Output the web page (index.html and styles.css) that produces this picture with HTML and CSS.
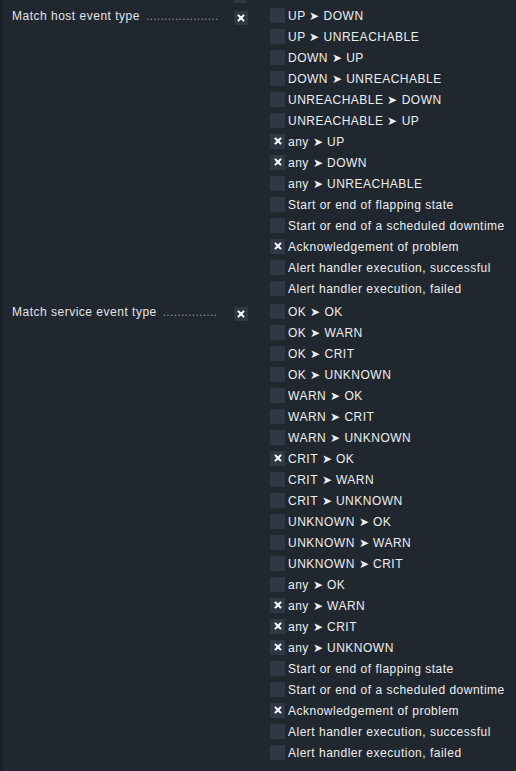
FILE: index.html
```html
<!DOCTYPE html>
<html>
<head>
<meta charset="utf-8">
<link rel="stylesheet" href="styles.css">
</head>
<body>
<div class="form">
  <div class="prev"><span class="prev-toggle"></span></div>

  <div class="row">
    <div class="title"><span class="title-text">Match host event type</span><span class="dots">....................</span></div>
    <div class="toggle"><svg viewBox="0 0 10 10" class="x"><path d="M1.2 2.6 2.6 1.2 5 3.6 7.4 1.2 8.8 2.6 6.4 5 8.8 7.4 7.4 8.8 5 6.4 2.6 8.8 1.2 7.4 3.6 5Z"/></svg></div>
    <ul class="choices">
      <li><span class="cb"></span>UP ➤ DOWN</li>
      <li><span class="cb"></span>UP ➤ UNREACHABLE</li>
      <li><span class="cb"></span>DOWN ➤ UP</li>
      <li><span class="cb"></span>DOWN ➤ UNREACHABLE</li>
      <li><span class="cb"></span>UNREACHABLE ➤ DOWN</li>
      <li><span class="cb"></span>UNREACHABLE ➤ UP</li>
      <li><span class="cb on"><svg viewBox="0 0 10 10" class="x"><path d="M1.2 2.6 2.6 1.2 5 3.6 7.4 1.2 8.8 2.6 6.4 5 8.8 7.4 7.4 8.8 5 6.4 2.6 8.8 1.2 7.4 3.6 5Z"/></svg></span>any ➤ UP</li>
      <li><span class="cb on"><svg viewBox="0 0 10 10" class="x"><path d="M1.2 2.6 2.6 1.2 5 3.6 7.4 1.2 8.8 2.6 6.4 5 8.8 7.4 7.4 8.8 5 6.4 2.6 8.8 1.2 7.4 3.6 5Z"/></svg></span>any ➤ DOWN</li>
      <li><span class="cb"></span>any ➤ UNREACHABLE</li>
      <li><span class="cb"></span>Start or end of flapping state</li>
      <li><span class="cb"></span>Start or end of a scheduled downtime</li>
      <li><span class="cb on"><svg viewBox="0 0 10 10" class="x"><path d="M1.2 2.6 2.6 1.2 5 3.6 7.4 1.2 8.8 2.6 6.4 5 8.8 7.4 7.4 8.8 5 6.4 2.6 8.8 1.2 7.4 3.6 5Z"/></svg></span>Acknowledgement of problem</li>
      <li><span class="cb"></span>Alert handler execution, successful</li>
      <li><span class="cb"></span>Alert handler execution, failed</li>
    </ul>
  </div>

  <div class="row">
    <div class="title"><span class="title-text">Match service event type</span><span class="dots">...............</span></div>
    <div class="toggle"><svg viewBox="0 0 10 10" class="x"><path d="M1.2 2.6 2.6 1.2 5 3.6 7.4 1.2 8.8 2.6 6.4 5 8.8 7.4 7.4 8.8 5 6.4 2.6 8.8 1.2 7.4 3.6 5Z"/></svg></div>
    <ul class="choices">
      <li><span class="cb"></span>OK ➤ OK</li>
      <li><span class="cb"></span>OK ➤ WARN</li>
      <li><span class="cb"></span>OK ➤ CRIT</li>
      <li><span class="cb"></span>OK ➤ UNKNOWN</li>
      <li><span class="cb"></span>WARN ➤ OK</li>
      <li><span class="cb"></span>WARN ➤ CRIT</li>
      <li><span class="cb"></span>WARN ➤ UNKNOWN</li>
      <li><span class="cb on"><svg viewBox="0 0 10 10" class="x"><path d="M1.2 2.6 2.6 1.2 5 3.6 7.4 1.2 8.8 2.6 6.4 5 8.8 7.4 7.4 8.8 5 6.4 2.6 8.8 1.2 7.4 3.6 5Z"/></svg></span>CRIT ➤ OK</li>
      <li><span class="cb"></span>CRIT ➤ WARN</li>
      <li><span class="cb"></span>CRIT ➤ UNKNOWN</li>
      <li><span class="cb"></span>UNKNOWN ➤ OK</li>
      <li><span class="cb"></span>UNKNOWN ➤ WARN</li>
      <li><span class="cb"></span>UNKNOWN ➤ CRIT</li>
      <li><span class="cb"></span>any ➤ OK</li>
      <li><span class="cb on"><svg viewBox="0 0 10 10" class="x"><path d="M1.2 2.6 2.6 1.2 5 3.6 7.4 1.2 8.8 2.6 6.4 5 8.8 7.4 7.4 8.8 5 6.4 2.6 8.8 1.2 7.4 3.6 5Z"/></svg></span>any ➤ WARN</li>
      <li><span class="cb on"><svg viewBox="0 0 10 10" class="x"><path d="M1.2 2.6 2.6 1.2 5 3.6 7.4 1.2 8.8 2.6 6.4 5 8.8 7.4 7.4 8.8 5 6.4 2.6 8.8 1.2 7.4 3.6 5Z"/></svg></span>any ➤ CRIT</li>
      <li><span class="cb on"><svg viewBox="0 0 10 10" class="x"><path d="M1.2 2.6 2.6 1.2 5 3.6 7.4 1.2 8.8 2.6 6.4 5 8.8 7.4 7.4 8.8 5 6.4 2.6 8.8 1.2 7.4 3.6 5Z"/></svg></span>any ➤ UNKNOWN</li>
      <li><span class="cb"></span>Start or end of flapping state</li>
      <li><span class="cb"></span>Start or end of a scheduled downtime</li>
      <li><span class="cb on"><svg viewBox="0 0 10 10" class="x"><path d="M1.2 2.6 2.6 1.2 5 3.6 7.4 1.2 8.8 2.6 6.4 5 8.8 7.4 7.4 8.8 5 6.4 2.6 8.8 1.2 7.4 3.6 5Z"/></svg></span>Acknowledgement of problem</li>
      <li><span class="cb"></span>Alert handler execution, successful</li>
      <li><span class="cb"></span>Alert handler execution, failed</li>
    </ul>
  </div>
</div>
</body>
</html>
```
FILE: styles.css
```css
html, body {
  margin: 0;
  padding: 0;
  background: #21272f;
}
body {
  font-family: "Liberation Sans", Arial, sans-serif;
  font-size: 12px;
  letter-spacing: 0.5px;
  color: #eceef0;
  height: 771px;
  overflow: hidden;
}
.form {
  border-left: 3px solid #1c2028;
  min-height: 771px;
  box-sizing: border-box;
}
.prev {
  height: 3px;
  padding-left: 231px;
}
.prev-toggle {
  display: block;
  width: 13px;
  height: 3px;
  background: #2f3845;
  border-radius: 0 0 1px 1px;
}
.row {
  display: grid;
  grid-template-columns: 210px 14px auto;
  column-gap: 12px;
  padding-left: 9px;
  padding-top: 2px;
}
.title {
  display: flex;
  height: 21px;
  align-items: center;
  white-space: nowrap;
  overflow: hidden;
  color: #e2e4e6;
}
.dots {
  color: #8d939b;
  margin-left: 6px;
  letter-spacing: 0.3px;
}
.toggle {
  margin-top: 6px;
  width: 14px;
  height: 14px;
  background: #2f3845;
  border-radius: 1px;
  display: flex;
  align-items: center;
  justify-content: center;
}
.x {
  width: 10px;
  height: 10px;
  fill: #ffffff;
}
.choices {
  list-style: none;
  margin: 0 0 0 10px;
  padding: 0;
}
.choices li {
  height: 21px;
  display: flex;
  align-items: center;
  gap: 3px;
  white-space: nowrap;
}
.cb {
  width: 15px;
  height: 15px;
  background: #2f3845;
  border-radius: 1px;
  display: flex;
  align-items: flex-start;
  justify-content: center;
  flex: none;
}
.cb .x {
  margin-top: 2px;
}
```
